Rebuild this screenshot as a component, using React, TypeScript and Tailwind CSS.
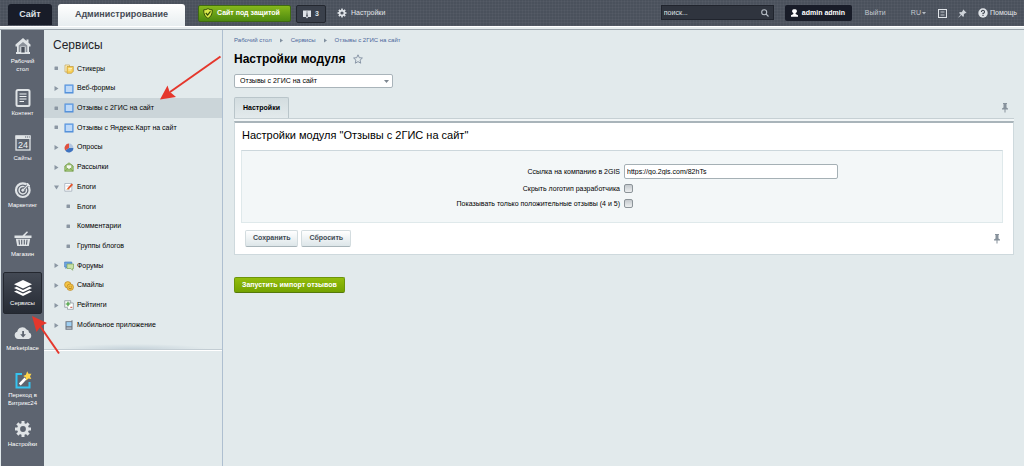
import { useState, type ReactNode } from "react";

/* ---------- rail icons ---------- */

function HomeIcon() {
  return (
    <svg viewBox="0 0 18 18" className="size-[18px]" fill="#dfe3e6">
      <path d="M9 1 1.500 7.500v2H3V15H2v2h14v-2h-1V9.500h1.500v-2L14.500 5.800V2.500h-2v1.600z" />
      <path d="M9 5 4.700 8.500V15h1.600V9.500h5.400V15h1.600V8.500z" fill="#8b919a" />
      <path d="M7.300 10h3.400v5.500H7.300z" fill="#4a505b" />
    </svg>
  );
}

function ContentIcon() {
  return (
    <svg viewBox="0 0 18 18" className="size-[18px]">
      <rect x="2.500" y="1" width="13" height="16" rx="1.500" fill="#5d6470" stroke="#dfe3e6" strokeWidth="2" />
      <path d="M5.500 5h7M5.500 7.500h7M5.500 10h7M5.500 12.500h4.500" stroke="#eef1f3" strokeWidth="1.200" />
    </svg>
  );
}

function CalendarIcon() {
  return (
    <svg viewBox="0 0 18 18" className="size-[18px]">
      <rect x="2" y="2" width="14" height="14" fill="#5d6470" stroke="#dfe3e6" strokeWidth="1.300" />
      <path d="M1.500 1.500h15V5h-15z" fill="#dfe3e6" />
      <path d="M11 3h1.200M13 3h1.200M15 3h.8" stroke="#5d6470" strokeWidth="1.200" />
      <text x="9" y="13.800" textAnchor="middle" fontSize="9" fill="#eef1f3">
        24
      </text>
    </svg>
  );
}

function TargetIcon() {
  return (
    <svg viewBox="0 0 18 18" className="size-[18px]" fill="none" stroke="#dfe3e6">
      <circle cx="8.800" cy="9.200" r="6.800" strokeWidth="2.200" />
      <circle cx="8.800" cy="9.200" r="3.700" strokeWidth="1.500" />
      <circle cx="8.800" cy="9.200" r="1.100" fill="#dfe3e6" />
      <path d="M10 8l4.500-4.500" stroke="#5d6470" strokeWidth="2.600" />
      <path d="M9 9l6-6M13.500 2v2.500H16" strokeWidth="1.200" />
    </svg>
  );
}

function BasketIcon() {
  return (
    <svg viewBox="0 0 18 18" className="size-[18px]" fill="#dfe3e6">
      <path d="M8.500 5.500 13 1.200l1 1L10.800 5.500H17.500V8h-17V5.500z" />
      <path d="M1.800 8.700h14.400L14.800 16H3.200z" />
      <path d="M5 9.800l.5 4.800M7.700 9.800v4.800M10.300 9.800v4.800M13 9.800l-.5 4.800" stroke="#5d6470" strokeWidth="1.100" />
    </svg>
  );
}

function LayersIcon() {
  return (
    <svg viewBox="0 0 20 18" className="h-[18px] w-5" fill="#fff">
      <path d="M10 1 19 5.300 10 9.600 1 5.300z" />
      <path d="M1 9l2.600-1.200L10 10.900l6.400-3.100L19 9l-9 4.300z" />
      <path d="M1 12.600l2.600-1.200L10 14.500l6.400-3.100L19 12.600l-9 4.300z" />
    </svg>
  );
}

function CloudIcon() {
  return (
    <svg viewBox="0 0 18 18" className="size-[18px]">
      <path
        d="M4.200 15A3.700 3.700 0 0 1 3.200 7.800 5.200 5.200 0 0 1 12.600 5.600 3 3 0 0 1 15 8.600 3.300 3.300 0 0 1 14.600 15z"
        fill="#dfe3e6"
      />
      <path d="M8.200 7h1.800v3.300h2L9.100 13.400 6.200 10.300h2z" fill="#5d6470" />
    </svg>
  );
}

function WandIcon() {
  return (
    <svg viewBox="0 0 18 18" className="size-[18px]">
      <path d="M8 3H2.500v13.500h13V11" fill="none" stroke="#35c3f0" strokeWidth="2" />
      <path d="M5.800 13.500l5.700-6" stroke="#fff" strokeWidth="2.600" />
      <path
        d="M13.200.300l1.300 2.500 3-.1-1.500 2.600 1.300 2.700-2.900-.6-2.200 2-.4-2.900L9.200 5.100l2.700-1.300z"
        fill="#ffd54a"
      />
    </svg>
  );
}

function GearIcon({ color, className }: { color: string; className: string }) {
  const teeth = [0, 45, 90, 135, 180, 225, 270, 315];
  return (
    <svg viewBox="0 0 18 18" className={className} aria-hidden="true">
      <circle cx="9" cy="9" r="4.400" fill="none" stroke={color} strokeWidth="3" />
      {teeth.map((angle) => (
        <rect key={angle} x="7.500" y="1" width="3" height="3" fill={color} transform={`rotate(${angle} 9 9)`} />
      ))}
    </svg>
  );
}

type RailEntry = { label: string; icon: ReactNode; height: string; active?: boolean };

const rail: RailEntry[] = [
  { label: "Рабочий стол", icon: <HomeIcon />, height: "h-[52px]" },
  { label: "Контент", icon: <ContentIcon />, height: "h-[45px]" },
  { label: "Сайты", icon: <CalendarIcon />, height: "h-[47px]" },
  { label: "Маркетинг", icon: <TargetIcon />, height: "h-[49px]" },
  { label: "Магазин", icon: <BasketIcon />, height: "h-[49px]" },
  { label: "Сервисы", icon: <LayersIcon />, height: "h-[45px]", active: true },
  { label: "Marketplace", icon: <CloudIcon />, height: "h-[47px]" },
  { label: "Переход в Битрикс24", icon: <WandIcon />, height: "h-[49px]" },
  { label: "Настройки", icon: <GearIcon color="#dfe3e6" className="size-[18px]" />, height: "h-[45px]" },
];

/* ---------- menu icons ---------- */

function StickerIcon() {
  return (
    <svg viewBox="0 0 10 10" className="size-[10px]">
      <path d="M1 1h4.500v7H1z" fill="#fff3c4" stroke="#c09a45" strokeWidth=".6" />
      <path d="M3 2.500h6.300v4.700L7.500 9.300H3z" fill="#f7cf56" stroke="#b98d2c" strokeWidth=".6" />
      <path d="M4.300 4.600h3.700M4.300 6h3" stroke="#fff6d6" strokeWidth=".8" />
    </svg>
  );
}

function FormIcon() {
  return (
    <svg viewBox="0 0 10 10" className="size-[10px]">
      <path d="M.5.500h9v9h-9z" fill="#4c8bd6" />
      <path d="M1.300 1.300h7.400v6.900H1.300z" fill="#7db2ee" />
      <path d="M2 3h6M2 5h6M2 7h6" stroke="#fff" strokeWidth="1.100" />
    </svg>
  );
}

function PieIcon() {
  return (
    <svg viewBox="0 0 10 10" className="size-[10px]">
      <circle cx="5" cy="5" r="4.400" fill="#d8dfe8" />
      <path d="M5 5V.6A4.400 4.400 0 0 0 1.300 7.400z" fill="#e0523f" />
      <path d="M5 5 1.300 7.400A4.400 4.400 0 0 0 9.400 5z" fill="#3f73bf" />
      <path d="M5 5h4.400A4.400 4.400 0 0 0 5 .6z" fill="#b3c6e0" />
    </svg>
  );
}

function MailIcon() {
  return (
    <svg viewBox="0 0 10 10" className="size-[10px]" strokeWidth=".7" stroke="#6f9a45">
      <path d="M.8 4 5 .8 9.200 4v5.200H.8z" fill="#a9cd7c" />
      <path d="M2.200 2.800h5.600v3L5 7.500 2.200 5.800z" fill="#f4f7ee" />
      <path d="M.8 9.200 4 6.500M9.200 9.200 6 6.500" fill="none" />
    </svg>
  );
}

function BlogIcon() {
  return (
    <svg viewBox="0 0 10 10" className="size-[10px]">
      <path d="M.8 1.500h7v7.700h-7z" fill="#fff" stroke="#8d99a8" strokeWidth=".6" />
      <path d="M2.200 4h3M2.200 7.800h4" stroke="#a9b4c0" strokeWidth=".6" />
      <path d="M3 6.800 7.500 1.500l1.600 1.300L4.600 7.600z" fill="#e2572f" />
      <path d="M3 6.800 2.600 8l2-.4z" fill="#f2c15f" />
    </svg>
  );
}

function ForumIcon() {
  return (
    <svg viewBox="0 0 10 10" className="size-[10px]" strokeWidth=".6">
      <path d="M.6 1h7.200v5H3L1.800 7.500V6H.6z" fill="#6ea4df" stroke="#3f78bd" />
      <path d="M3 3h6.500v4.500H8.600V9.300L6.800 7.500H3z" fill="#c9e0a8" stroke="#6f9a45" />
    </svg>
  );
}

function SmileIcon() {
  return (
    <svg viewBox="0 0 10 10" className="size-[10px]" stroke="#b07a1c" strokeWidth=".6">
      <circle cx="3.800" cy="3.800" r="3.200" fill="#f6c646" />
      <circle cx="6.200" cy="6.200" r="3.300" fill="#f6c646" />
      <path d="M4.500 6.800q1.700 2 3.400 0M5.200 4.800v.9M7.200 4.800v.9" fill="none" stroke="#7a4e0c" />
    </svg>
  );
}

function RatingIcon() {
  return (
    <svg viewBox="0 0 10 10" className="size-[10px]">
      <path d="M.7.700h6v6.600h-6z" fill="#f3f6f2" stroke="#75808c" strokeWidth=".6" />
      <path d="M5 3h4.300v6.300H3.500V7.300" fill="#fff" stroke="#75808c" strokeWidth=".6" />
      <path d="M1.700 4h4.600M4 1.700v4.600" stroke="#3c9a35" strokeWidth="1.200" />
      <path d="M6.300 7.300h2" stroke="#c44d3c" strokeWidth="1" />
    </svg>
  );
}

function PhoneIcon() {
  return (
    <svg viewBox="0 0 10 10" className="size-[10px]">
      <path d="M1.500 1.200h6V.3h1v9.400h-7z" fill="#68727f" />
      <path d="M2.500 2.100h5v3.900h-5z" fill="#9fd0f3" />
      <path d="M2.500 7.200h5M2.500 8.600h5" stroke="#d6dce2" strokeWidth=".7" />
    </svg>
  );
}

type Marker = "dot" | "right" | "down";
type MenuEntry = { label: string; marker: Marker; icon?: ReactNode; active?: boolean };

const menu: MenuEntry[] = [
  { label: "Стикеры", marker: "dot", icon: <StickerIcon /> },
  { label: "Веб-формы", marker: "right", icon: <FormIcon /> },
  { label: "Отзывы с 2ГИС на сайт", marker: "dot", icon: <FormIcon />, active: true },
  { label: "Отзывы с Яндекс.Карт на сайт", marker: "dot", icon: <FormIcon /> },
  { label: "Опросы", marker: "right", icon: <PieIcon /> },
  { label: "Рассылки", marker: "right", icon: <MailIcon /> },
  { label: "Блоги", marker: "down", icon: <BlogIcon /> },
  { label: "Блоги", marker: "dot" },
  { label: "Комментарии", marker: "dot" },
  { label: "Группы блогов", marker: "dot" },
  { label: "Форумы", marker: "right", icon: <ForumIcon /> },
  { label: "Смайлы", marker: "right", icon: <SmileIcon /> },
  { label: "Рейтинги", marker: "right", icon: <RatingIcon /> },
  { label: "Мобильное приложение", marker: "right", icon: <PhoneIcon /> },
];

function MarkerIcon({ kind }: { kind: Marker }) {
  return (
    <svg viewBox="0 0 5 5" className="size-[5px]" fill="#8b97a3">
      {kind === "dot" && <rect x=".5" y=".5" width="3.500" height="3.500" rx=".5" />}
      {kind === "right" && <path d="M.5 0 4.500 2.500.5 5z" />}
      {kind === "down" && <path d="M0 .5h5L2.500 4.500z" />}
    </svg>
  );
}

/* ---------- small shared drawings ---------- */

function PanelPin() {
  return (
    <svg viewBox="0 0 6 10" className="h-[10px] w-[6px]" fill="#87929c">
      <path d="M1 0h4v1H4.500v3.500L6 5.500v1H3.500V9.500h-1v-3H0v-1l1.500-1V1H1z" />
    </svg>
  );
}

function Crumbs() {
  const items = ["Рабочий стол", "Сервисы", "Отзывы с 2ГИС на сайт"];
  return (
    <nav className="flex h-5 items-center text-[6px] text-[#4a659a]">
      {items.map((item, i) => (
        <span key={item} className="flex items-center">
          {i > 0 && (
            <svg viewBox="0 0 3 5" className="mx-2 h-[5px] w-[3px]" fill="#8190a0">
              <path d="M0 .5 3 2.500 0 4.500z" />
            </svg>
          )}
          <a href="#">{item}</a>
        </span>
      ))}
    </nav>
  );
}

function TopBar() {
  return (
    <header className="flex h-[26px] shrink-0 items-start bg-[#4a515c] bg-[repeating-linear-gradient(90deg,rgba(255,255,255,0.03)_0_1px,transparent_1px_3px),repeating-linear-gradient(0deg,rgba(255,255,255,0.03)_0_1px,transparent_1px_3px)] pt-[4px] pr-[7px] pl-2 text-[7px] text-[#e3e6ea]">
      <a
        href="#"
        className="flex h-[21px] w-[44px] items-center justify-center rounded-t-[3px] bg-[#181c28] text-[9px] font-bold text-[#dfe3e8]"
      >
        Сайт
      </a>
      <a
        href="#"
        className="ml-[6px] flex h-[22px] w-[127px] items-center justify-center rounded-t-[3px] bg-linear-to-b from-white to-[#e8eef0] text-[9px] font-bold text-[#454b55]"
      >
        Администрирование
      </a>
      <button className="mt-px ml-[13px] flex h-[17px] w-[93px] items-center gap-1 rounded-[2px] border border-[#3f6a10] bg-linear-to-b from-[#86b81b] to-[#4e8a10] pl-[4px] text-[7px] font-bold whitespace-nowrap text-white">
        <svg viewBox="0 0 10 11" className="h-[11px] w-[10px]">
          <path d="M5 .6Q7 2 9.300 1.800 9.500 8 5 10.400.5 8 .7 1.800 3 2 5 .6z" fill="#d9e94a" stroke="#2f4a08" strokeWidth=".9" />
          <path d="M2.800 5l1.800 2L7.500 3.300" fill="none" stroke="#2f4a08" strokeWidth="1.200" />
        </svg>
        Сайт под защитой
      </button>
      <button className="mt-px ml-[5px] flex h-[18px] w-[30px] items-center gap-[4px] rounded-[2px] border border-[#23272f] bg-[#3a404b] pl-[6px] text-[7px] font-bold text-[#dfe3e8]">
        <svg viewBox="0 0 8 9" className="h-[9px] w-2">
          <path d="M0 .5h8V7H5.200L4 8.500 2.800 7H0z" fill="#dfe3e8" />
          <path d="M4 1.500v1M4 3.200v2.800M3 6h2" stroke="#3a404b" strokeWidth="1" />
        </svg>
        3
      </button>
      <button className="mt-[4px] ml-[11px] flex items-center gap-[4px] text-[7px] leading-[10px]">
        <GearIcon color="#dfe3e8" className="size-[10px]" />
        Настройки
      </button>

      <div className="grow" />

      <label className="mt-px flex h-[15px] w-[113px] items-center border border-[#20242d] bg-[#2f343e]">
        <input
          aria-label="Поиск"
          placeholder="поиск..."
          className="h-[13px] min-w-0 grow bg-transparent pl-[2px] text-[7px] leading-[13px] text-white outline-none placeholder:text-[#dfe3e8]"
        />
        <svg viewBox="0 0 8 8" className="mr-1 size-2" fill="none" stroke="#b9c0c8" strokeWidth="1.100">
          <circle cx="3.200" cy="3.200" r="2.500" />
          <path d="M5 5l2.500 2.500" />
        </svg>
      </label>
      <button className="mt-px ml-[11px] flex h-4 w-[67px] items-center gap-[4px] rounded-[2px] bg-[#181c28] pl-[6px] text-[7px] font-bold whitespace-nowrap text-white">
        <svg viewBox="0 0 7 8" className="h-2 w-[7px]" fill="#fff">
          <path d="M3.500.3a1.900 1.900 0 0 1 1.200 3.600L4.600 5 7 6.200v1.500H0V6.200L2.400 5l-.1-1.100A1.900 1.900 0 0 1 3.500.3z" />
        </svg>
        admin admin
      </button>
      <div className="mt-[4px] flex items-center leading-[10px]">
        <a href="#" className="ml-[13px] w-[22px] text-[#c3c9d0]">
          Выйти
        </a>
        <button className="ml-6 flex items-center gap-px text-[#c3c9d0]">
          RU
          <svg viewBox="0 0 4 3" className="h-[3px] w-1" fill="#b4bbc3">
            <path d="M0 0h4L2 2.500z" />
          </svg>
        </button>
        <button aria-label="Панель" className="ml-[12px]">
          <svg viewBox="0 0 9 9" className="size-[9px]" fill="none" stroke="#dfe3e8">
            <rect x=".5" y=".5" width="8" height="8" />
            <path d="M2.500 3h4M2.500 6h4" strokeWidth=".8" />
          </svg>
        </button>
        <button aria-label="Закрепить" className="ml-[11px]">
          <svg viewBox="0 0 9 9" className="size-[9px]" fill="#cfd4da">
            <path d="M5.300.5 8.500 3.700l-.8.5-.5-.1-1.400 1.500.1 1.500-.8.800L3.300 6 .8 8.500.3 8.300 2.700 5.400 1.100 3.900l.8-.8 1.500.1L4.900 1.800l-.1-.7z" />
          </svg>
        </button>
        <a href="#" className="ml-[11px] flex items-center gap-[2px]">
          <svg viewBox="0 0 10 10" className="size-[10px]">
            <circle cx="5" cy="5" r="4.700" fill="#dfe3e8" />
            <path d="M3.500 4A1.500 1.500 0 1 1 5 5.300v.9M5 7v1.100" fill="none" stroke="#3a404b" strokeWidth="1.100" />
          </svg>
          Помощь
        </a>
      </div>
    </header>
  );
}

function Rail() {
  return (
    <nav className="w-[43px] shrink-0 bg-[#5d6470] px-[2px]">
      <ul>
        {rail.map((item) => (
          <li key={item.label} className={item.height}>
            <button
              className={
                item.active
                  ? "flex h-[42px] w-full flex-col items-center gap-[2px] rounded-[2px] border border-[#23272f] bg-linear-to-b from-[#434954] to-[#262b34] pt-[6px] text-[6px] leading-[8px] text-white"
                  : "flex w-full flex-col items-center gap-[2px] px-[4px] pt-[7px] text-[6px] leading-[8px] text-white"
              }
            >
              {item.icon}
              <span>{item.label}</span>
            </button>
          </li>
        ))}
      </ul>
    </nav>
  );
}

function Sidebar() {
  return (
    <aside className="w-[179px] shrink-0 border-r border-[#aebfd0]">
      <h2 className="h-[29px] pt-[7px] pl-[9px] text-[12px] leading-[17px] text-[#1f2429]">Сервисы</h2>
      <ul className="grid h-[276px] auto-rows-fr text-[7px] text-black">
        {menu.map((item, i) => (
          <li key={i} className={item.active ? "bg-[#cbd5d9]" : ""}>
            <a href="#" className="flex h-full items-center pl-[10px]">
              {item.icon ? (
                <>
                  <MarkerIcon kind={item.marker} />
                  <span className="mr-[3px] ml-[5px]">{item.icon}</span>
                </>
              ) : (
                <span className="mr-[6px] ml-3">
                  <MarkerIcon kind={item.marker} />
                </span>
              )}
              {item.label}
            </a>
          </li>
        ))}
      </ul>
      <div className="h-[15px] border-b border-[#c3cdd3] bg-[radial-gradient(ellipse_at_bottom,rgba(160,180,195,0.45),transparent_60%)] bg-[length:100%_6px] bg-bottom bg-no-repeat" />
      <div className="h-px bg-white" />
    </aside>
  );
}

const plainButton =
  "h-[17px] rounded-[2px] border border-[#d3dcdf] border-b-[#a9b5ba] bg-linear-to-b from-white to-[#dde6e9] px-[7px] text-[7px] font-bold text-[#3f4b54]";

function SettingsPanel() {
  const [link, setLink] = useState("https://go.2gis.com/82hTs");
  const box =
    "size-[9px] appearance-none rounded-[2px] border border-[#8c9499] bg-linear-to-b from-[#c4c9cd] to-[#eceff0] checked:bg-[#5b9be0]";
  return (
    <section>
      <div className="flex items-start justify-between">
        <button className="h-[21px] w-[55px] rounded-t-[2px] border border-b-0 border-[#b9c5ca] bg-linear-to-b from-[#d3dde0] to-[#e3eaec] text-[7px] font-bold text-black">
          Настройки
        </button>
        <button aria-label="Закрепить вкладки" className="mt-[6px] mr-[6px]">
          <PanelPin />
        </button>
      </div>
      <div className="h-[3px] border-t border-[#c6d0d4] bg-[#f2f6f7]" />
      <div className="border border-t-2 border-[#ced9dd] border-t-[#a9b4ba] bg-white pb-[7px]">
        <h2 className="pt-[4px] pl-[7px] text-[11px] leading-[17px] text-black">
          Настройки модуля "Отзывы с 2ГИС на сайт"
        </h2>
        <div className="mt-[6px] mr-[10px] ml-[6px] grid h-[73px] grid-cols-2 content-start items-center gap-x-1 border border-[#dfe9eb] border-t-[#ccd7dc] bg-[#f3f7f8] pt-[13px] text-[7px] text-black">
          <label htmlFor="link" className="text-right leading-[15px]">
            Ссылка на компанию в 2GIS
          </label>
          <input
            id="link"
            value={link}
            onChange={(e) => setLink(e.target.value)}
            className="h-[15px] w-[214px] rounded-[2px] border border-[#a5b0b5] bg-white px-[2px] text-[7px] leading-[13px] outline-none"
          />
          <label htmlFor="logo" className="mt-[2px] text-right leading-[15px]">
            Скрыть логотип разработчика
          </label>
          <input id="logo" type="checkbox" className={`mt-[2px] ${box}`} />
          <label htmlFor="positive" className="text-right leading-[15px]">
            Показывать только положительные отзывы (4 и 5)
          </label>
          <input id="positive" type="checkbox" className={box} />
        </div>
        <div className="mt-[7px] flex items-center gap-[3px] pr-[13px] pl-[10px]">
          <button className={plainButton}>Сохранить</button>
          <button className={plainButton}>Сбросить</button>
          <button aria-label="Закрепить кнопки" className="ml-auto">
            <PanelPin />
          </button>
        </div>
      </div>
    </section>
  );
}

function Main() {
  return (
    <main className="min-w-0 grow pr-[10px] pl-[11px]">
      <Crumbs />
      <div className="flex h-[18px] items-center gap-2">
        <h1 className="text-[12px] font-bold text-black">Настройки модуля</h1>
        <button aria-label="В избранное">
          <svg viewBox="0 0 10 10" className="size-[10px]" fill="none" stroke="#7f8c9f" strokeWidth=".9">
            <path d="M5 .8l1.300 2.900 3.100.3-2.300 2.100.6 3.100L5 7.600 2.300 9.200l.6-3.100L.6 4l3.100-.3z" />
          </svg>
        </button>
      </div>
      <div className="mt-[6px] mb-[9px] grid w-[159px]">
        <select
          aria-label="Модуль"
          className="col-start-1 row-start-1 h-[14px] appearance-none rounded-[2px] border border-[#a9b4ba] bg-white pl-[5px] text-[7px] text-black"
        >
          <option>Отзывы с 2ГИС на сайт</option>
        </select>
        <svg
          viewBox="0 0 5 3"
          className="pointer-events-none col-start-1 row-start-1 mr-[4px] h-[3px] w-[5px] self-center justify-self-end"
          fill="#7d8790"
        >
          <path d="M0 0h5L2.500 3z" />
        </svg>
      </div>
      <SettingsPanel />
      <button className="mt-[22px] h-4 rounded-[2px] border border-[#6c950a] border-b-[#55790a] bg-linear-to-b from-[#93bd0c] to-[#74a300] px-[7px] text-[7px] font-bold text-white">
        Запустить импорт отзывов
      </button>
    </main>
  );
}

function Pointers() {
  return (
    <svg
      className="pointer-events-none absolute top-0 left-0 h-[466px] w-[240px]"
      viewBox="0 0 240 466"
      fill="#e5372c"
      stroke="#e5372c"
      aria-hidden="true"
    >
      <path d="M220.500 56.500 170 92" strokeWidth="2" />
      <path d="M160 99.500 167.500 85.500 169.500 91.500 176 97z" stroke="none" />
      <path d="M59 353.500 40 326" strokeWidth="2" />
      <path d="M32 316 47 323 41 326 36.500 332z" stroke="none" />
    </svg>
  );
}

export default function App() {
  return (
    <div className="relative flex min-h-screen flex-col bg-[#e2eaec] font-['Liberation_Sans',Arial,sans-serif]">
      <TopBar />
      <div className="h-[4px] shrink-0 border-t border-b border-t-white border-b-[#9aa3aa] bg-[#e8eef0]" />
      <div className="flex grow pl-px">
        <Rail />
        <Sidebar />
        <Main />
      </div>
      <Pointers />
    </div>
  );
}
